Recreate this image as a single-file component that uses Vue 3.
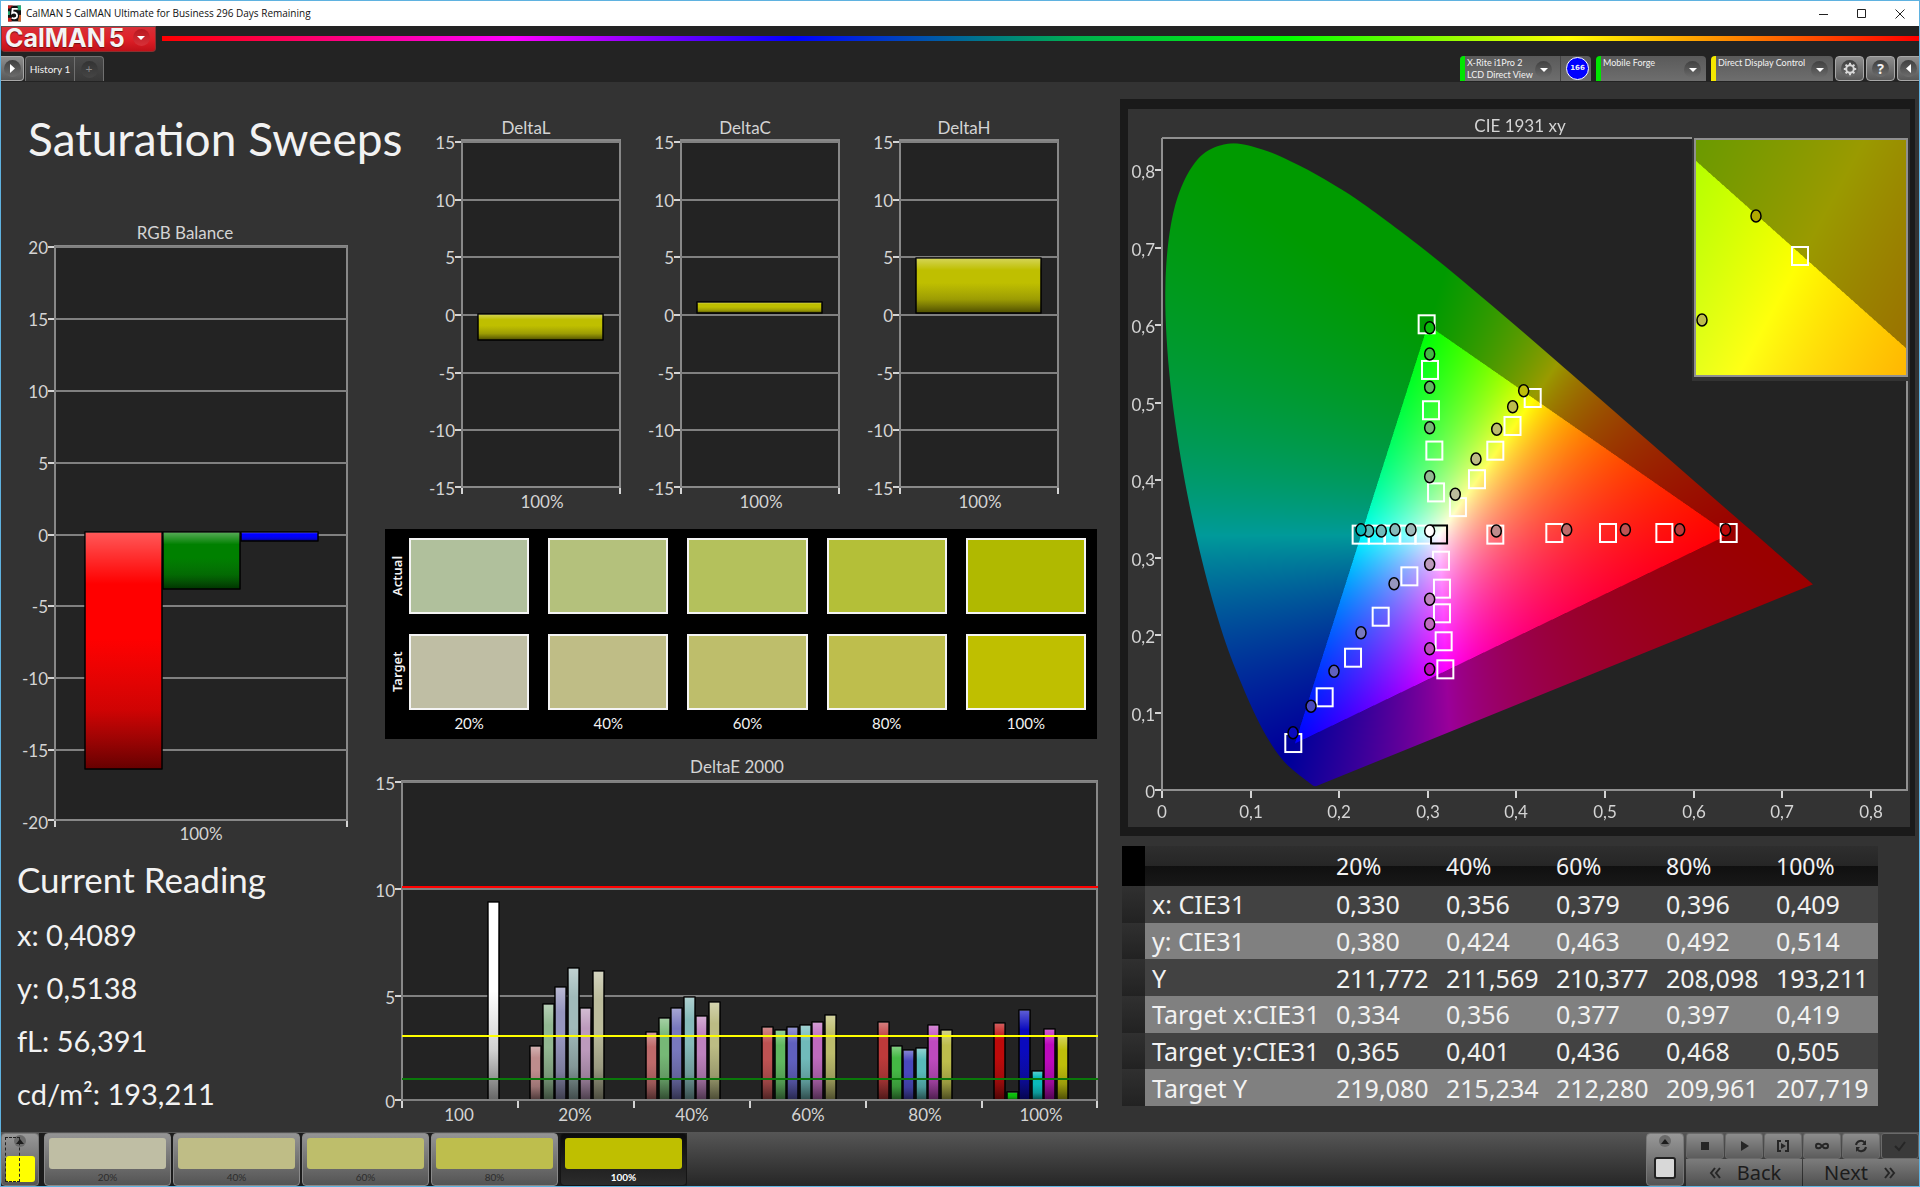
<script setup>
import { onMounted, ref } from 'vue'

const range = (from, to, step) => {
  const out = []
  for (let v = from; v <= to; v += step) out.push(v)
  return out
}

// RGB balance
const rgbY = (v) => Math.round(319.5 - v * 14.37)
const rgbTicks = range(-20, 20, 5)
const rgbBars = [
  { color: '#ff0000', x: 84, y: 317, h: 237 },
  { color: '#008000', x: 162, y: 317, h: 57 },
  { color: '#0000ff', x: 240, y: 317, h: 9 },
]

// Delta L / C / H
const deltaY = (v) => Math.round(200 - v * 11.54)
const deltaTicks = range(-15, 15, 5)
const deltas = [
  { title: 'DeltaL', y: 199, h: 26 },
  { title: 'DeltaC', y: 187, h: 11 },
  { title: 'DeltaH', y: 143, h: 55 },
]

// Colour swatches
const levels = ['20%', '40%', '60%', '80%', '100%']
const actual = ['#b0c09c', '#b4c17c', '#b4c15c', '#b4bf38', '#b0b900']
const target = ['#bfbea4', '#bfbd86', '#bebe6b', '#bebe4d', '#bfbf00']

// DeltaE 2000
const palette = [
  ['#be8c8c', '#92b892', '#9696be', '#a0baba', '#bc9abc', '#bcbc9c'],
  ['#be6a6a', '#76b876', '#7878be', '#86baba', '#be82be', '#bcbc84'],
  ['#be5252', '#60b860', '#6060be', '#70baba', '#be6abe', '#bcbc6c'],
  ['#be3a3a', '#44b844', '#4848be', '#58baba', '#be4abe', '#bcbc4c'],
  ['#be0a0a', '#0abe0a', '#0a0abe', '#0ababa', '#be0abe', '#bebe0a'],
]
const tops = [
  [301, 259, 242, 223, 263, 226],
  [287, 273, 263, 252, 271, 257],
  [282, 285, 282, 280, 277, 270],
  [277, 301, 305, 303, 280, 285],
  [278, 347, 265, 326, 284, 291],
]
const errorBars = [{ x: 117, y: 157, color: '#ffffff' }]
tops.forEach((group, g) =>
  group.forEach((y, i) =>
    errorBars.push({ x: Math.round(159 + g * 116 + i * 12.5), y, color: palette[g][i] })
  )
)
const errorTicks = [0, 5, 10, 15]
const errorY = (v) => Math.min(355, Math.round(357.5 - v * 21.4))
const errorLabels = ['100', ...levels]

// CIE 1931 diagram
const cx = (v) => 34 + v * 886
const cy = (v) => 681 - v * 775
const targets = [
  [0.2987, 0.6009], [0.3025, 0.542], [0.3036, 0.49], [0.3074, 0.438], [0.3093, 0.384],
  [0.334, 0.365], [0.3555, 0.401], [0.3762, 0.4378], [0.3956, 0.4697], [0.4184, 0.5058],
  [0.3762, 0.3295], [0.4428, 0.3316], [0.5034, 0.3316], [0.567, 0.3316], [0.6396, 0.3316],
  [0.2242, 0.3295], [0.2427, 0.3295], [0.26, 0.3295], [0.2773, 0.3295], [0.2949, 0.3295],
  [0.2792, 0.2757], [0.2468, 0.2236], [0.2156, 0.1707], [0.1836, 0.1196], [0.1482, 0.0606],
  [0.3149, 0.2959], [0.316, 0.2598], [0.316, 0.228], [0.3179, 0.1919], [0.3198, 0.1557],
]
const measured = [
  [[0.3773, 0.3342], [0.4568, 0.3359], [0.523, 0.3359], [0.5843, 0.3359], [0.6362, 0.3359]],
  [[0.3021, 0.4043], [0.3021, 0.4675], [0.3021, 0.5196], [0.3021, 0.5626], [0.3021, 0.5965]],
  [[0.2619, 0.2662], [0.2246, 0.203], [0.1941, 0.1532], [0.1682, 0.108], [0.1479, 0.0739]],
  [[0.281, 0.3359], [0.263, 0.3359], [0.2475, 0.3342], [0.2333, 0.3342], [0.2246, 0.3359]],
  [[0.3021, 0.2912], [0.3021, 0.2461], [0.3021, 0.2142], [0.3021, 0.1823], [0.3021, 0.1557]],
  [[0.331, 0.3815], [0.3544, 0.4271], [0.3778, 0.4654], [0.3958, 0.4946], [0.4082, 0.5152]],
]
const readings = measured.flatMap((hue, h) =>
  hue.map(([x, y], level) => ({ x, y, color: palette[level][h] }))
)
const axisLabel = (v) => (v === 0 ? '0' : '0,' + v)

const locus = [
  [0.1741, 0.005], [0.1714, 0.0051], [0.1689, 0.0069], [0.1644, 0.0109], [0.1566, 0.0177],
  [0.144, 0.0297], [0.1355, 0.0399], [0.1241, 0.0578], [0.1096, 0.0868], [0.0913, 0.1327],
  [0.0687, 0.2007], [0.0454, 0.295], [0.0235, 0.4127], [0.0082, 0.5384], [0.0039, 0.6548],
  [0.0139, 0.7502], [0.0389, 0.812], [0.0743, 0.8338], [0.1142, 0.8262], [0.1547, 0.8059],
  [0.1929, 0.7816], [0.2296, 0.7543], [0.3016, 0.6923], [0.3731, 0.6245], [0.4441, 0.5547],
  [0.5125, 0.4866], [0.5752, 0.4242], [0.627, 0.3725], [0.6658, 0.334], [0.6915, 0.3083],
  [0.719, 0.2809], [0.7347, 0.2653],
]

function chromaticity(x, y) {
  const z = 1 - x - y
  const r = 3.2406 * x - 1.5372 * y - 0.4986 * z
  const g = -0.9689 * x + 1.8758 * y + 0.0415 * z
  const b = 0.0557 * x - 0.204 * y + 1.057 * z
  const inside = r >= 0 && g >= 0 && b >= 0
  const scale = (inside ? 255 : 154) / Math.max(r, g, b)
  return [Math.max(0, r) * scale, Math.max(0, g) * scale, Math.max(0, b) * scale]
}

function paintRegion(width, height, toX, toY) {
  const layer = document.createElement('canvas')
  layer.width = width
  layer.height = height
  const ctx = layer.getContext('2d')
  const image = ctx.createImageData(width, height)
  let p = 0
  for (let j = 0; j < height; j++) {
    const y = toY(j + 0.5)
    for (let i = 0; i < width; i++) {
      const [r, g, b] = chromaticity(toX(i + 0.5), y)
      image.data[p++] = r
      image.data[p++] = g
      image.data[p++] = b
      image.data[p++] = 255
    }
  }
  ctx.putImageData(image, 0, 0)
  return layer
}

const diagram = ref(null)

onMounted(() => {
  const ctx = diagram.value.getContext('2d')
  ctx.scale(2, 2)
  ctx.fillStyle = '#232323'
  ctx.fillRect(34, 29, 745, 652)

  ctx.save()
  ctx.beginPath()
  const pts = locus.map(([x, y]) => [cx(x), cy(y)])
  ctx.moveTo(pts[0][0], pts[0][1])
  for (let i = 0; i < pts.length - 1; i++) {
    const a = pts[Math.max(0, i - 1)]
    const b = pts[i]
    const c = pts[i + 1]
    const d = pts[Math.min(pts.length - 1, i + 2)]
    ctx.bezierCurveTo(
      b[0] + (c[0] - a[0]) / 6, b[1] + (c[1] - a[1]) / 6,
      c[0] - (d[0] - b[0]) / 6, c[1] - (d[1] - b[1]) / 6,
      c[0], c[1]
    )
  }
  ctx.closePath()
  ctx.clip()
  const main = paintRegion(1380, 1304, (i) => i / 2 / 886, (j) => (652 - j / 2) / 775)
  ctx.drawImage(main, 34, 29, 690, 652)
  ctx.restore()

  ctx.fillStyle = '#333333'
  ctx.fillRect(564, 27, 218, 245)
  const inset = paintRegion(424, 476, (i) => 0.394 + (i / 424) * 0.05, (j) => 0.53 - (j / 476) * 0.05)
  ctx.drawImage(inset, 567, 29, 212, 238)
})

const rows = [
  ['x: CIE31', '0,330', '0,356', '0,379', '0,396', '0,409'],
  ['y: CIE31', '0,380', '0,424', '0,463', '0,492', '0,514'],
  ['Y', '211,772', '211,569', '210,377', '208,098', '193,211'],
  ['Target x:CIE31', '0,334', '0,356', '0,377', '0,397', '0,419'],
  ['Target y:CIE31', '0,365', '0,401', '0,436', '0,468', '0,505'],
  ['Target Y', '219,080', '215,234', '212,280', '209,961', '207,719'],
]
</script>

<template>
  <div class="window">
    <header class="titlebar">
      <svg class="app-icon" viewBox="0 0 14 17" aria-hidden="true">
        <rect width="14" height="17" fill="#111" />
        <path d="M0 0h5v3H0zM0 13h4v4H0z" fill="#c22" />
        <path d="M10 0h4v5h-4zM0 6h2v4H0z" fill="#2a7" />
        <path d="M11 10h3v7h-3z" fill="#c63" />
        <path d="M10.500 3H5L4.500 8.500C7 7 10 8 10 11s-3.500 3.800-6 2.300" fill="none" stroke="#111" stroke-width="4" />
        <path d="M10.500 3.500H5L4.500 8C7 6.500 9.800 8 9.800 10.800s-3.300 3.700-5.800 2.200" fill="none" stroke="#fff" stroke-width="2" />
      </svg>
      <span class="caption">CalMAN 5 CalMAN Ultimate for Business 296 Days Remaining</span>
      <div class="window-controls">
        <button aria-label="Minimize"><svg viewBox="0 0 10 10"><path d="M0 5.500h9" /></svg></button>
        <button aria-label="Maximize"><svg viewBox="0 0 10 10"><path d="M.5.500h8v8h-8z" /></svg></button>
        <button aria-label="Close"><svg viewBox="0 0 10 10"><path d="M.5.500l9 9M9.500.500l-9 9" /></svg></button>
      </div>
    </header>

    <div class="brandbar">
      <button class="brand">
        <span class="brand-name">CalMAN</span><span class="brand-name">5</span>
        <span class="knob red"><svg viewBox="0 0 8 4"><path d="M0 0h8L4 4z" /></svg></span>
      </button>
      <div class="rainbow"></div>
    </div>

    <nav class="tabs">
      <button class="plate edge-left" aria-label="Expand">
        <span class="knob"><svg class="side" viewBox="0 0 5 9"><path d="M0 0v9l5-4.500z" /></svg></span>
      </button>
      <button class="tab history">History 1</button>
      <button class="tab add" aria-label="Add tab"><span class="knob dim">+</span></button>
      <div class="spacer"></div>
      <div class="device meter">
        <button class="device-menu ok">
          <span>X-Rite i1Pro 2<br />LCD Direct View</span>
          <span class="knob"><svg viewBox="0 0 8 4"><path d="M0 0h8L4 4z" /></svg></span>
        </button>
        <span class="count">166</span>
      </div>
      <button class="device device-menu source ok">
        <span>Mobile Forge</span>
        <span class="knob"><svg viewBox="0 0 8 4"><path d="M0 0h8L4 4z" /></svg></span>
      </button>
      <button class="device device-menu display warn">
        <span>Direct Display Control</span>
        <span class="knob"><svg viewBox="0 0 8 4"><path d="M0 0h8L4 4z" /></svg></span>
      </button>
      <button class="plate" aria-label="Settings">
        <span class="knob">
          <svg class="gear" viewBox="0 0 14 14">
            <circle cx="7" cy="7" r="3.800" />
            <path d="M7 .8v2.200M7 11v2.200M.8 7H3M11 7h2.200M2.600 2.600l1.600 1.600M9.800 9.800l1.600 1.600M11.400 2.600L9.800 4.200M4.200 9.800l-1.600 1.600" />
          </svg>
        </span>
      </button>
      <button class="plate" aria-label="Help"><span class="knob help">?</span></button>
      <button class="plate edge-right" aria-label="Collapse">
        <span class="knob"><svg class="side" viewBox="0 0 5 9"><path d="M5 0v9L0 4.500z" /></svg></span>
      </button>
    </nav>

    <main class="workspace">
      <section class="col-left">
        <h1>Saturation Sweeps</h1>
        <svg class="chart" viewBox="0 0 370 635" role="img" aria-label="RGB Balance">
          <defs>
            <linearGradient id="bar-shade" x1="0" y1="0" x2="0" y2="1">
              <stop offset="0" stop-color="#fff" stop-opacity=".35" />
              <stop offset=".22" stop-color="#fff" stop-opacity="0" />
              <stop offset=".45" stop-color="#222" stop-opacity="0" />
              <stop offset=".75" stop-color="#111" stop-opacity=".2" />
              <stop offset="1" stop-color="#000" stop-opacity=".6" />
            </linearGradient>
          </defs>
          <text class="label middle" x="184" y="24">RGB Balance</text>
          <rect class="plot" x="54" y="31" width="292" height="574" />
          <g v-for="v in rgbTicks" :key="v">
            <path v-if="v > -20" class="grid" :d="`M54 ${rgbY(v)}H346`" />
            <path class="tick" :d="`M47 ${Math.min(605, rgbY(v))}h6`" />
            <text class="label end" x="47" :y="rgbY(v) + 7">{{ v }}</text>
          </g>
          <path class="tick" d="M54 606v6M346 606v6" />
          <g v-for="b in rgbBars" :key="b.color">
            <rect class="bar" :x="b.x" :y="b.y" width="77" :height="b.h" :fill="b.color" />
            <rect class="bar" :x="b.x" :y="b.y" width="77" :height="b.h" fill="url(#bar-shade)" />
          </g>
          <text class="label middle" x="200" y="625">100%</text>
        </svg>
        <div class="reading">
          <h2>Current Reading</h2>
          <p>x: 0,4089</p>
          <p>y: 0,5138</p>
          <p>fL: 56,391</p>
          <p>cd/m²: 193,211</p>
        </div>
      </section>

      <section class="col-middle">
        <div class="delta-row">
          <svg v-for="d in deltas" :key="d.title" class="chart" viewBox="0 0 219 397" role="img" :aria-label="d.title">
            <text class="label middle" x="114" y="19">{{ d.title }}</text>
            <rect class="plot" x="50" y="25" width="158" height="347" />
            <g v-for="v in deltaTicks" :key="v">
              <path v-if="v > -15" class="grid" :d="`M50 ${deltaY(v)}H208`" />
              <path class="tick" :d="`M43 ${Math.min(372, deltaY(v))}h6`" />
              <text class="label end" x="43" :y="deltaY(v) + 7">{{ v }}</text>
            </g>
            <path class="tick" d="M50 373v6M208 373v6" />
            <rect class="bar" x="66" :y="d.y" width="125" :height="d.h" fill="#bfbf00" />
            <rect class="bar" x="66" :y="d.y" width="125" :height="d.h" fill="url(#bar-shade)" />
            <text class="label middle" x="130" y="393">100%</text>
          </svg>
        </div>

        <div class="swatches">
          <div class="swatch-row">
            <span class="side-label">Actual</span>
            <div class="cells"><i v-for="c in actual" :key="c" :style="{ background: c }"></i></div>
          </div>
          <div class="swatch-row">
            <span class="side-label">Target</span>
            <div class="cells"><i v-for="c in target" :key="c" :style="{ background: c }"></i></div>
          </div>
          <div class="cells captions"><span v-for="l in levels" :key="l">{{ l }}</span></div>
        </div>

        <svg class="chart" viewBox="0 0 741 387" role="img" aria-label="DeltaE 2000">
          <text class="label middle" x="366" y="28">DeltaE 2000</text>
          <rect class="plot" x="31" y="36" width="695" height="319" />
          <g v-for="v in errorTicks" :key="v">
            <path class="grid" :d="`M31 ${errorY(v)}H726`" />
            <path class="tick" :d="`M24 ${errorY(v)}h6`" />
            <text class="label end" x="24" :y="errorY(v) + 8">{{ v }}</text>
          </g>
          <path v-for="i in 7" :key="i" class="tick" :d="`M${31 + (i - 1) * 116 - (i > 6 ? 1 : 0)} 356v7`" />
          <g v-for="b in errorBars" :key="b.x">
            <rect class="bar" :x="b.x" :y="b.y" width="11" :height="355 - b.y" :fill="b.color" />
            <rect class="bar" :x="b.x" :y="b.y" width="11" :height="355 - b.y" fill="url(#bar-shade)" />
          </g>
          <path class="grid" d="M31 355H726" />
          <path class="limit" stroke="#ff0000" d="M31 142H727" />
          <path class="limit" stroke="#ffff00" d="M31 291H727" />
          <path class="limit" stroke="#0a780a" d="M31 334H727" />
          <text v-for="(l, i) in errorLabels" :key="l" class="label middle" :x="Math.round(88 + i * 116.4)" y="376">{{ l }}</text>
        </svg>
      </section>

      <section class="col-right">
        <div class="cie">
          <canvas ref="diagram" class="layer" width="1564" height="1436"></canvas>
          <svg class="layer" viewBox="0 0 782 718" role="img" aria-label="CIE 1931 xy">
            <text class="label middle" x="392" y="23">CIE 1931 xy</text>
            <path class="frame" d="M34 29v652h745V272M34 29h530" />
            <g v-for="i in 9" :key="i">
              <path class="tick" :d="`M27 ${Math.round(cy((i - 1) / 10))}h6M${Math.round(cx((i - 1) / 10))} 682v7`" />
              <text class="label end" x="27" :y="Math.round(cy((i - 1) / 10)) + 8">{{ axisLabel(i - 1) }}</text>
              <text class="label middle" :x="Math.round(cx((i - 1) / 10))" y="709">{{ axisLabel(i - 1) }}</text>
            </g>
            <rect v-for="(t, i) in targets" :key="'t' + i" class="target" :x="cx(t[0]) - 8" :y="cy(t[1]) - 9" width="16" height="18" />
            <rect class="target white-point" :x="cx(0.3127) - 8" :y="cy(0.3297) - 9" width="16" height="18" />
            <ellipse v-for="(m, i) in readings" :key="'m' + i" class="reading-dot" :cx="cx(m.x)" :cy="cy(m.y)" rx="5" ry="6" :fill="m.color" />
            <ellipse class="reading-dot" :cx="cx(0.3021)" :cy="cy(0.3342)" rx="5" ry="6" fill="#fff" />
            <rect class="frame" x="567" y="30" width="212" height="237" />
            <rect class="target" x="664" y="138" width="16" height="18" />
            <ellipse class="reading-dot" cx="628" cy="107" rx="5" ry="6" fill="#b0a800" />
            <ellipse class="reading-dot" cx="574" cy="211" rx="5" ry="6" fill="#bcbc4c" />
          </svg>
        </div>

        <table>
          <thead>
            <tr>
              <td class="handle"></td>
              <td></td>
              <th v-for="l in levels" :key="l" scope="col">{{ l }}</th>
            </tr>
          </thead>
          <tbody>
            <tr v-for="r in rows" :key="r[0]">
              <td class="handle"></td>
              <th scope="row">{{ r[0] }}</th>
              <td v-for="(v, i) in r.slice(1)" :key="i">{{ v }}</td>
            </tr>
          </tbody>
        </table>
      </section>
    </main>

    <footer class="dock">
      <button class="current focused" aria-label="Current pattern">
        <span class="knob up"><svg viewBox="0 0 8 5"><path d="M0 5h8L4 0z" /></svg></span>
        <i></i>
      </button>
      <div class="patterns">
        <button v-for="(c, i) in target" :key="c" class="pattern" :class="{ active: i === 4 }">
          <i :style="{ background: c }"></i>
          <span>{{ levels[i] }}</span>
        </button>
      </div>
      <div class="spacer"></div>
      <button class="current" aria-label="Pattern window">
        <span class="knob up"><svg viewBox="0 0 8 5"><path d="M0 5h8L4 0z" /></svg></span>
        <b></b>
      </button>
      <div class="transport">
        <div class="icons">
          <button aria-label="Stop"><svg viewBox="0 0 16 16"><path class="fill" d="M4 4h8v8H4z" /></svg></button>
          <button aria-label="Play"><svg viewBox="0 0 16 16"><path class="fill" d="M5 3l8 5-8 5z" /></svg></button>
          <button aria-label="Step"><svg viewBox="0 0 16 16"><path d="M6 3H3v10h3M10 3h3v10h-3" /><path class="fill" d="M6 5l5 3-5 3z" /></svg></button>
          <button aria-label="Continuous"><svg viewBox="0 0 16 16"><path d="M8 8C6 5 2 5 2 8s4 3 6 0 6-3 6 0-4 3-6 0z" /></svg></button>
          <button aria-label="Refresh"><svg viewBox="0 0 16 16"><path d="M3 7a5 5 0 0 1 9-2M13 9a5 5 0 0 1-9 2" /><path class="fill" d="M13 2v5H9zM3 14V9h4z" /></svg></button>
          <button class="off" aria-label="Accept"><svg viewBox="0 0 16 16"><path d="M3 8l4 4 6-8" /></svg></button>
        </div>
        <div class="steps">
          <button><svg viewBox="0 0 16 16"><path d="M8 3L4 8l4 5M13 3L9 8l4 5" /></svg><span>Back</span></button>
          <button><span>Next</span><svg viewBox="0 0 16 16"><path d="M3 3l4 5-4 5M8 3l4 5-4 5" /></svg></button>
        </div>
      </div>
    </footer>
  </div>
</template>

<style>
body {
  margin: 0;
  background: #333333;
}
</style>

<style scoped>
* {
  box-sizing: border-box;
}
.window {
  min-height: 100vh;
  display: flex;
  flex-direction: column;
  border: 1px solid #5fb2e0;
  background: #333333;
  color: #f2f2f2;
  font-family: Lato, "Noto Sans", sans-serif;
  overflow: hidden;
}
button {
  margin: 0;
  padding: 0;
  border: 0;
  background: none;
  color: inherit;
  font: inherit;
}
svg {
  display: block;
}
.spacer {
  flex: 1;
}

/* title bar */
.titlebar {
  display: flex;
  align-items: center;
  height: 25px;
  padding-left: 7px;
  background: #ffffff;
  color: #111111;
}
.app-icon {
  width: 13px;
  height: 17px;
  margin-right: 5px;
}
.caption {
  flex: 1;
  font: 10px/25px "Open Sans", sans-serif;
}
.window-controls {
  display: flex;
}
.window-controls button {
  display: grid;
  place-items: center;
  width: 38px;
  height: 25px;
}
.window-controls svg {
  width: 10px;
  height: 10px;
  fill: none;
  stroke: #222222;
  stroke-width: 1;
}

/* brand bar */
.brandbar {
  display: flex;
  align-items: flex-start;
  gap: 6px;
  height: 30px;
  background: #232323;
}
.brand {
  display: flex;
  align-items: center;
  gap: 3px;
  width: 155px;
  height: 26px;
  padding: 0 0 3px 3px;
  border: 1px solid #8a3030;
  border-top-color: #555555;
  border-radius: 0 0 4px 4px;
  background: linear-gradient(#d83038, #e02028 50%, #c01018);
}
.brand-name {
  font: 700 25px/20px Inter, sans-serif;
  color: #f4f4f4;
  text-shadow: 0 1px 1px #701010;
}
.rainbow {
  flex: 1;
  height: 5px;
  margin-top: 10px;
  background: linear-gradient(90deg, #ff0000, #ff00ff 20%, #0000ff 36%, #00b050 52%, #00ff00 64%, #ffff00 80%, #ff0000);
}
.knob {
  display: grid;
  place-items: center;
  flex: none;
  width: 17px;
  height: 17px;
  border-radius: 50%;
  background: linear-gradient(#404040, #6c6c6c);
}
.knob svg {
  width: 8px;
  height: 4px;
  fill: #ffffff;
}
.knob svg.side {
  width: 5px;
  height: 9px;
}
.knob svg.gear {
  width: 14px;
  height: 14px;
  fill: none;
  stroke: #d8d8d8;
  stroke-width: 2;
}
.knob.red {
  margin-left: 5px;
  background: linear-gradient(#b81820, #d83038);
}
.knob.dim {
  background: linear-gradient(#333333, #454545);
  color: #8a8a8a;
  font-size: 12px;
  line-height: 16px;
}
.knob.help {
  font: 700 14px/17px "Noto Sans", sans-serif;
}
.knob.up {
  width: 12px;
  height: 12px;
  background: #6a6a6a;
}
.knob.up svg {
  height: 5px;
  fill: #1c1c1c;
}

/* tab row */
.tabs {
  display: flex;
  align-items: flex-start;
  height: 26px;
  background: #232323;
}
.plate {
  display: grid;
  place-items: center;
  width: 29px;
  height: 25px;
  margin-left: 2px;
  border: 1px solid #a8a8a8;
  border-radius: 4px;
  background: linear-gradient(#8e8e8e, #585858);
}
.edge-left {
  width: 23px;
  margin: 0 1px 0 0;
  border-left: 0;
  border-radius: 0 4px 4px 0;
}
.edge-right {
  width: 22px;
  border-right: 0;
  border-radius: 4px 0 0 4px;
}
.tab {
  height: 25px;
  border: 1px solid #707070;
  border-bottom: 0;
  background: linear-gradient(#4a4a4a, #383838);
  font-size: 10px;
}
.history {
  width: 50px;
  border-radius: 4px 0 0 0;
}
.add {
  display: grid;
  place-items: center;
  width: 29px;
  border-left: 0;
  border-radius: 0 4px 0 0;
}
.device {
  height: 25px;
  border-radius: 4px 4px 0 0;
  background: linear-gradient(#5a5a5a, #6e6e6e);
}
.device-menu {
  display: flex;
  align-items: flex-start;
  justify-content: space-between;
  padding: 1px 5px 0 2px;
  border-left: 5px solid #00e600;
  font-size: 9px;
  line-height: 12px;
  text-align: left;
  white-space: nowrap;
}
.device-menu .knob {
  margin-top: 4px;
}
.warn {
  border-left-color: #f4e800;
}
.meter {
  display: flex;
  width: 131px;
  margin-right: 5px;
}
.meter .device-menu {
  width: 101px;
  height: 25px;
  padding-right: 8px;
  border-radius: 4px 0 0 0;
  border-right: 1px solid #444444;
}
.count {
  width: 23px;
  height: 23px;
  margin: 1px 0 0 5px;
  border: 1px solid #ffffff;
  border-radius: 50%;
  background: #0000ff;
  font: 700 7px/21px "DejaVu Sans", sans-serif;
  text-align: center;
}
.source {
  width: 110px;
  margin-right: 5px;
}
.display {
  width: 122px;
}

/* workspace */
.workspace {
  flex: 1;
  display: grid;
  grid-template-columns: minmax(0, 370fr) minmax(0, 741fr) minmax(0, 807fr);
  align-items: start;
}
.chart {
  width: 100%;
  height: auto;
}
h1 {
  margin: 0;
  padding: 27px 0 46px 27px;
  font-size: 46px;
  font-weight: 400;
  line-height: 60px;
  white-space: nowrap;
}
.reading {
  padding-left: 16px;
}
h2 {
  margin: 0;
  font-size: 35px;
  font-weight: 400;
  line-height: 58px;
}
.reading p {
  margin: 0;
  font-size: 29px;
  line-height: 53px;
}
.label {
  fill: #d4d4d4;
  font-size: 17px;
}
.middle {
  text-anchor: middle;
}
.end {
  text-anchor: end;
}
.plot {
  fill: #232323;
  stroke: #888888;
  stroke-width: 2;
}
.grid {
  stroke: #808080;
  stroke-width: 2;
}
.frame {
  fill: none;
  stroke: #909090;
  stroke-width: 2;
}
.tick {
  stroke: #d4d4d4;
  stroke-width: 2;
}
.bar {
  stroke: #000000;
  stroke-width: 1;
}
.limit {
  stroke-width: 2;
}

.col-middle {
  padding-top: 33px;
}
.delta-row {
  display: grid;
  grid-template-columns: repeat(3, minmax(0, 1fr));
  padding: 0 43px 0 41px;
}
.swatches {
  display: flex;
  flex-direction: column;
  margin: 17px 15px 6px 14px;
  padding: 9px 11px 2px 0;
  background: #000000;
}
.swatch-row {
  display: flex;
  height: 76px;
  margin-bottom: 20px;
}
.swatch-row + .swatch-row {
  margin-bottom: 0;
}
.side-label {
  width: 24px;
  font: 600 13px/24px "Noto Sans", sans-serif;
  text-align: center;
  writing-mode: vertical-rl;
  transform: rotate(180deg);
}
.cells {
  flex: 1;
  display: grid;
  grid-template-columns: repeat(5, minmax(0, 1fr));
  column-gap: 19px;
}
.cells i {
  border: 2px solid #f4f4f4;
}
.captions {
  margin-left: 24px;
  font-size: 15px;
  line-height: 27px;
  text-align: center;
}

.col-right {
  padding: 17px 4px 0 8px;
}
.cie {
  display: grid;
  border: 8px solid #1a1a1a;
  border-width: 10px 5px 9px 8px;
}
.layer {
  grid-area: 1 / 1;
  width: 100%;
  height: auto;
}
.target {
  fill: none;
  stroke: #ffffff;
  stroke-width: 2;
}
.white-point {
  stroke: #000000;
}
.reading-dot {
  stroke: #000000;
  stroke-width: 1.5;
}

table {
  width: calc(100% - 39px);
  max-width: 756px;
  height: 260px;
  margin: 10px 0 0 2px;
  border-collapse: collapse;
  table-layout: fixed;
  font: 25px/30px "Noto Sans", sans-serif;
  text-align: left;
}
th,
td {
  padding: 0;
  font-weight: 400;
  white-space: nowrap;
}
thead tr {
  height: 40px;
  background: linear-gradient(#2e2e2e, #262626 50%, #101010 50%, #181818);
}
thead th {
  width: 110px;
  font-size: 23px;
}
thead th:last-child {
  width: 102px;
}
.handle {
  width: 23px;
  background: linear-gradient(#303030, #222222);
}
thead .handle {
  background: #000000;
}
.handle + th,
.handle + td {
  width: 191px;
  padding-left: 7px;
}
tbody tr {
  background: #424242;
}
tbody tr:nth-child(even) {
  background: #808080;
}

/* dock */
.dock {
  display: flex;
  height: 54px;
  padding-top: 1px;
  background: linear-gradient(#565656, #262626);
}
.current {
  position: relative;
  display: flex;
  flex-direction: column;
  align-items: center;
  width: 38px;
  padding-top: 1px;
  border: 1px solid #777777;
  border-radius: 4px;
  background: linear-gradient(#989898, #545454);
}
.focused::after {
  content: '';
  position: absolute;
  inset: 3px 18px 3px 3px;
  border: 1px dashed #222222;
}
.current i {
  width: 29px;
  height: 26px;
  margin-top: 9px;
  border-radius: 3px;
  background: #ffff00;
}
.current b {
  width: 22px;
  height: 22px;
  margin-top: 10px;
  border: 2px solid #222222;
  border-radius: 3px;
  background: #d8d8d8;
}
.patterns {
  display: flex;
  gap: 2px;
  padding: 0 0 0 5px;
  background: #1c1c1c;
}
.pattern {
  display: flex;
  flex-direction: column;
  width: 127px;
  padding: 4px 4px 0;
  border: 1px solid #8a8a8a;
  border-radius: 4px;
  background: linear-gradient(#949494, #545454);
  color: #2c2c2c;
  font-size: 10px;
  line-height: 16px;
}
.pattern i {
  height: 31px;
  border-radius: 3px;
}
.pattern.active {
  border-color: #151515;
  background: linear-gradient(#0c0c0c, #2c2c2c);
  color: #ffffff;
  font-weight: 700;
}
.transport {
  display: flex;
  flex-direction: column;
  width: 233px;
  margin-left: 2px;
}
.icons,
.steps {
  display: flex;
  gap: 1px;
}
.icons button {
  flex: 1;
  display: grid;
  place-items: center;
  height: 26px;
  border: 1px solid #6a6a6a;
  border-radius: 3px;
  background: linear-gradient(#8c8c8c, #5c5c5c);
}
.transport svg {
  width: 16px;
  height: 16px;
  fill: none;
  stroke: #262626;
  stroke-width: 2;
}
.transport svg .fill {
  fill: #262626;
  stroke: none;
}
.icons .off {
  background: #3a3a3a;
}
.steps button {
  flex: 1;
  display: flex;
  align-items: center;
  justify-content: center;
  gap: 14px;
  height: 27px;
  background: linear-gradient(#7c7c7c, #505050);
  color: #1c1c1c;
  font: 20px/26px "Noto Sans", sans-serif;
}
</style>
